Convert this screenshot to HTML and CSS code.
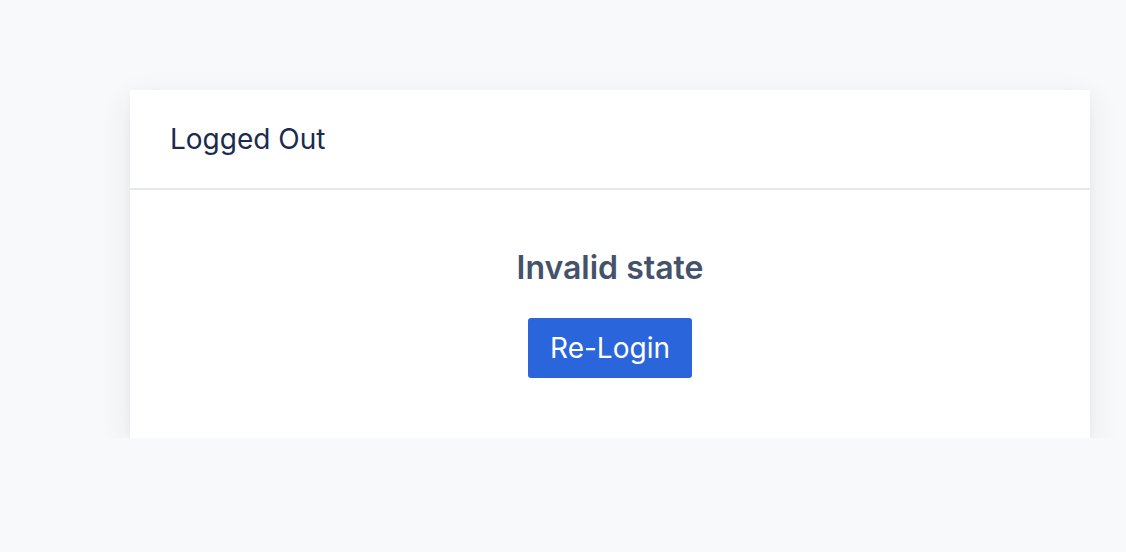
FILE: index.html
```html
<!DOCTYPE html>
<html>
<head>
<meta charset="utf-8">
<link rel="stylesheet" href="styles.css">
</head>
<body>
<div class="page">
  <div class="card">
    <div class="card-header">Logged Out</div>
    <div class="card-body">
      <h2 class="title">Invalid state</h2>
      <button class="btn">Re-Login</button>
    </div>
  </div>
</div>
</body>
</html>
```
FILE: styles.css
```css
html, body {
  margin: 0;
  padding: 0;
  background: #f8f9fb;
  font-family: Inter, "Noto Sans", sans-serif;
}
.page {
  padding: 90px 0 0 130px;
}
.card {
  width: 960px;
  background: #fff;
  box-shadow: 0 10px 30px rgba(30, 41, 59, 0.09), 0 2px 6px rgba(30, 41, 59, 0.03);
}
.card-header {
  display: flex;
  align-items: center;
  padding: 0 40px;
  font-size: 28px;
  font-weight: 400;
  color: #1a2b4f;
  border-bottom: 2px solid #e4e8ee;
  box-sizing: border-box;
  height: 100px;
}
.card-body {
  display: flex;
  flex-direction: column;
  align-items: center;
  padding: 56px 0 60px;
}
.title {
  margin: 0 0 28px;
  font-size: 32px;
  font-weight: 600;
  color: #45526b;
  line-height: 44px;
}
.btn {
  border: none;
  background: #2b65dc;
  color: #fff;
  font-family: inherit;
  font-size: 28px;
  height: 60px;
  padding: 0 22px;
  border-radius: 3px;
}
```
